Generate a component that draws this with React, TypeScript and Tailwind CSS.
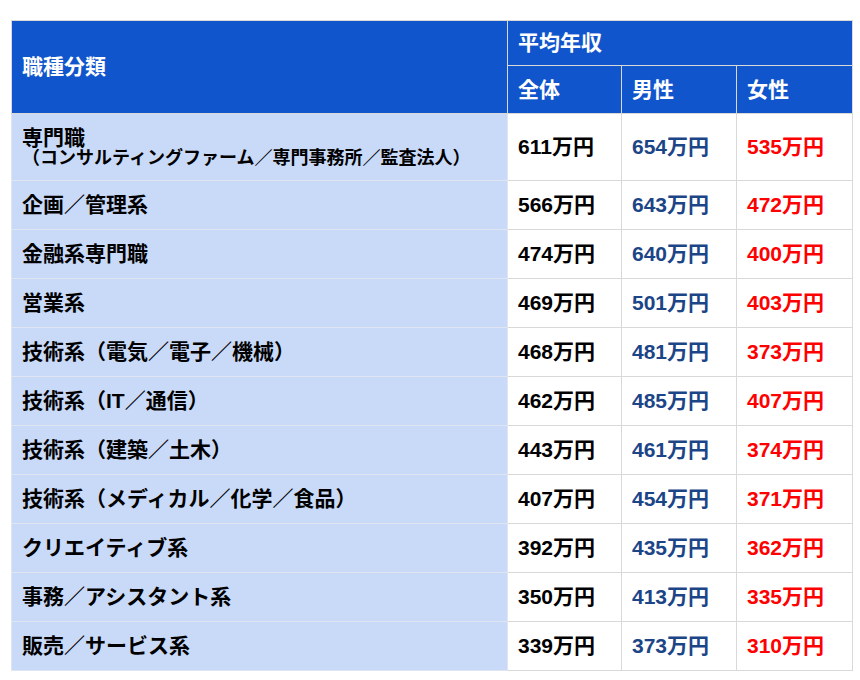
const rows: { name: string; sub?: string; all: string; male: string; female: string }[] = [
  { name: '専門職', sub: '（コンサルティングファーム／専門事務所／監査法人）', all: '611', male: '654', female: '535' },
  { name: '企画／管理系', all: '566', male: '643', female: '472' },
  { name: '金融系専門職', all: '474', male: '640', female: '400' },
  { name: '営業系', all: '469', male: '501', female: '403' },
  { name: '技術系（電気／電子／機械）', all: '468', male: '481', female: '373' },
  { name: '技術系（IT／通信）', all: '462', male: '485', female: '407' },
  { name: '技術系（建築／土木）', all: '443', male: '461', female: '374' },
  { name: '技術系（メディカル／化学／食品）', all: '407', male: '454', female: '371' },
  { name: 'クリエイティブ系', all: '392', male: '435', female: '362' },
  { name: '事務／アシスタント系', all: '350', male: '413', female: '335' },
  { name: '販売／サービス系', all: '339', male: '373', female: '310' },
];

export default function App() {
  return (
    <div className="h-[680px] w-[860px] bg-white pl-[11px] pt-5 font-['Liberation_Sans','Noto_Sans_CJK_JP',sans-serif] font-bold">
      <table className="w-[841px] table-fixed border-collapse text-[21px]">
        <colgroup>
          <col className="w-[496px]" />
          <col className="w-[114px]" />
          <col className="w-[115px]" />
          <col className="w-[116px]" />
        </colgroup>
        <thead className="bg-[#1155cc] text-white">
          <tr className="h-[45px]">
            <th rowSpan={2} className="border border-[#d9d9d9] px-[10px] text-left">
              職種分類
            </th>
            <th colSpan={3} className="border border-[#d9d9d9] px-[10px] text-left">
              平均年収
            </th>
          </tr>
          <tr className="h-[48px]">
            <th className="border border-[#d9d9d9] px-[10px] text-left">全体</th>
            <th className="border border-[#d9d9d9] px-[10px] text-left">男性</th>
            <th className="border border-[#d9d9d9] px-[10px] text-left">女性</th>
          </tr>
        </thead>
        <tbody>
          {rows.map((r) => (
            <tr key={r.name} className={r.sub ? 'h-[67px]' : 'h-[49px]'}>
              <td className="border border-[#dfe6f2] bg-[#c9daf8] px-[10px] leading-[1.1] text-black">
                <div>{r.name}</div>
                {r.sub && <div className="text-[18px]">{r.sub}</div>}
              </td>
              <td className="border border-[#d9d9d9] px-[10px] text-black">{r.all}万円</td>
              <td className="border border-[#d9d9d9] px-[10px] text-[#1c4587]">{r.male}万円</td>
              <td className="border border-[#d9d9d9] px-[10px] text-[#ff0000]">{r.female}万円</td>
            </tr>
          ))}
        </tbody>
      </table>
    </div>
  );
}
